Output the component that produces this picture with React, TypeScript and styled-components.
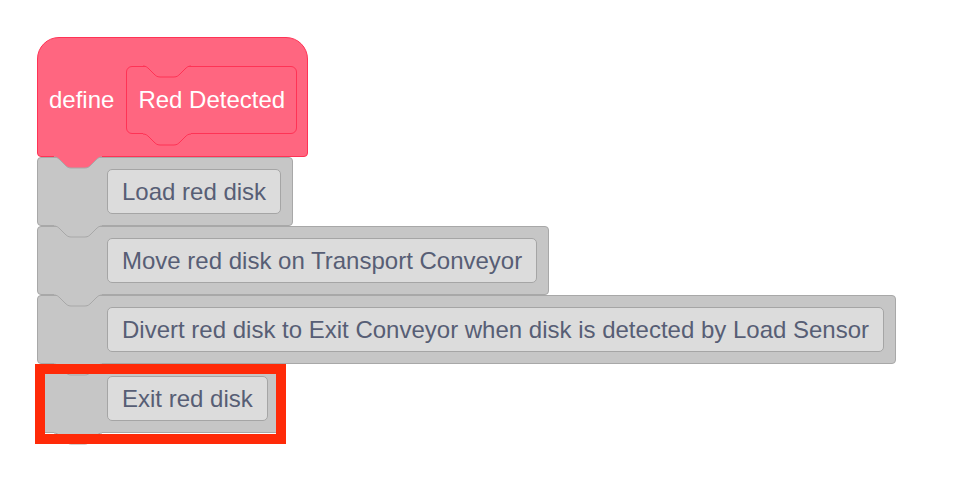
import React from 'react'
import styled, { createGlobalStyle } from 'styled-components'

const PINK = '#ff6680'
const PINK_EDGE = '#ff3355'
const GRAY = '#c6c6c6'
const GRAY_EDGE = '#a8a8a8'

// notch curve, 48 wide and 11 deep, scaled from the scratch-blocks path
const CURVE = 'c3,0 4.5,1.5 6,3 l5,5 c1.5,1.5 3,3 6,3 h14 c3,0 4.5,-1.5 6,-3 l5,-5 c1.5,-1.5 3,-3 6,-3'

const GlobalStyle = createGlobalStyle`
  body {
    margin: 0;
    background: #ffffff;
    font-family: "Liberation Sans", Arial, sans-serif;
  }
`

const Canvas = styled.div`
  display: flex;
  flex-direction: column;
  align-items: flex-start;
  padding: 37px;
`

const HatBlock = styled.div`
  position: relative;
  display: flex;
  align-items: center;
  gap: 12px;
  padding: 28px 10px 22px 11px;
  background: ${PINK};
  border: 1px solid ${PINK_EDGE};
  border-radius: 22px 22px 4px 4px;
  color: #ffffff;
  font-size: 24px;
`

const Label = styled.span`
  white-space: nowrap;
`

const Prototype = styled.div`
  position: relative;
  box-sizing: border-box;
  height: 68px;
  display: flex;
  align-items: center;
  padding: 0 11px;
  background: ${PINK};
  border: 1px solid ${PINK_EDGE};
  border-radius: 6px;
  white-space: nowrap;
`

const StackBlock = styled.div`
  position: relative;
  display: flex;
  padding: 11px 11px 11px 69px;
  background: ${GRAY};
  border: 1px solid ${GRAY_EDGE};
  border-radius: 4px;
`

const Field = styled.div`
  box-sizing: border-box;
  height: 45px;
  display: flex;
  align-items: center;
  padding: 0 14px;
  background: #dcdcdc;
  border: 1px solid #a5a5a5;
  border-radius: 5px;
  color: #575e75;
  font-size: 24px;
  white-space: nowrap;
`

const NotchSvg = styled.svg<{ $left: number }>`
  position: absolute;
  top: -3px;
  left: ${p => p.$left}px;
  overflow: visible;
`

const TabSvg = styled.svg<{ $left: number }>`
  position: absolute;
  bottom: -11.5px;
  left: ${p => p.$left}px;
  overflow: visible;
`

const Highlight = styled.div`
  position: absolute;
  top: -1px;
  left: -3px;
  right: -7px;
  bottom: -12px;
  border: 10px solid #ff2a08;
  pointer-events: none;
`

// dent in the top edge, filled with the colour of the tab sitting in it
const Notch = ({ fill, edge, left = 16 }: { fill: string; edge: string; left?: number }) => (
  <NotchSvg $left={left} width={48} height={13} viewBox="0 -2 48 13">
    <path d={`M0,-2 V0 ${CURVE} V-2 Z`} fill={fill} />
    <path d={`M0,0 ${CURVE}`} fill="none" stroke={edge} strokeWidth={1} />
  </NotchSvg>
)

// tab hanging below the bottom edge
const Tab = ({ fill, edge, left = 16 }: { fill: string; edge: string; left?: number }) => (
  <TabSvg $left={left} width={48} height={13} viewBox="0 -2 48 13">
    <path d={`M0,-2 V0 ${CURVE} V-2 Z`} fill={fill} />
    <path d={`M0,0 ${CURVE}`} fill="none" stroke={edge} strokeWidth={1} />
  </TabSvg>
)

const steps = [
  'Load red disk',
  'Move red disk on Transport Conveyor',
  'Divert red disk to Exit Conveyor when disk is detected by Load Sensor',
  'Exit red disk',
]

export default function App() {
  return (
    <>
      <GlobalStyle />
      <Canvas>
        <HatBlock>
          <Label>define</Label>
          <Prototype>
            <Notch fill={PINK} edge={PINK_EDGE} />
            Red Detected
            <Tab fill={PINK} edge={PINK_EDGE} />
          </Prototype>
        </HatBlock>
        {steps.map((text, i) => {
          const last = i === steps.length - 1
          return (
            <StackBlock key={text}>
              <Notch fill={i === 0 ? PINK : GRAY} edge={GRAY_EDGE} />
              <Field>{text}</Field>
              {last && <Tab fill={GRAY} edge={GRAY_EDGE} />}
              {last && <Highlight />}
            </StackBlock>
          )
        })}
      </Canvas>
    </>
  )
}
